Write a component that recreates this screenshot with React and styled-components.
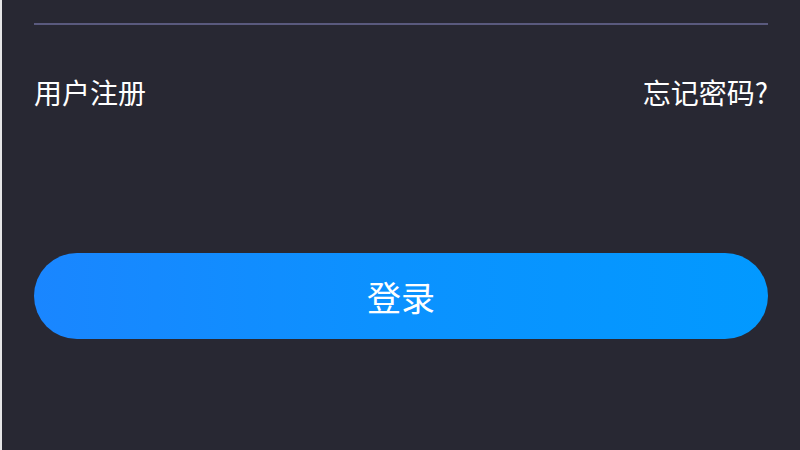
import styled, { createGlobalStyle } from "styled-components";

const GlobalStyle = createGlobalStyle`
  html, body {
    margin: 0;
    padding: 0;
    background: #282833;
  }
`;

const Page = styled.div`
  width: 800px;
  height: 450px;
  box-sizing: border-box;
  background: #282833;
  border-left: 2px solid #e6e6e8;
  padding: 23px 32px 0 32px;
  display: flex;
  flex-direction: column;
  font-family: "Noto Sans CJK SC", "Noto Sans", sans-serif;
  color: #ffffff;
  overflow: hidden;
`;

const Divider = styled.div`
  height: 2px;
  background: #5a5a7e;
`;

const LinkRow = styled.div`
  display: flex;
  justify-content: space-between;
  align-items: center;
  margin-top: 48px;
  height: 38px;
`;

const TextLink = styled.a`
  font-size: 28px;
  line-height: 38px;
  color: #ffffff;
  text-decoration: none;
  cursor: pointer;
`;

const LoginButton = styled.button`
  margin-top: 142px;
  height: 86px;
  width: 100%;
  border: none;
  border-radius: 43px;
  background: linear-gradient(90deg, #1a86ff 0%, #0b92ff 50%, #0299ff 100%);
  color: #ffffff;
  font-family: "Noto Sans CJK SC", "Noto Sans", sans-serif;
  font-size: 34px;
  cursor: pointer;
  padding: 0;
`;

export default function App() {
  return (
    <>
      <GlobalStyle />
      <Page>
        <Divider />
        <LinkRow>
          <TextLink>用户注册</TextLink>
          <TextLink>忘记密码?</TextLink>
        </LinkRow>
        <LoginButton>登录</LoginButton>
      </Page>
    </>
  );
}
